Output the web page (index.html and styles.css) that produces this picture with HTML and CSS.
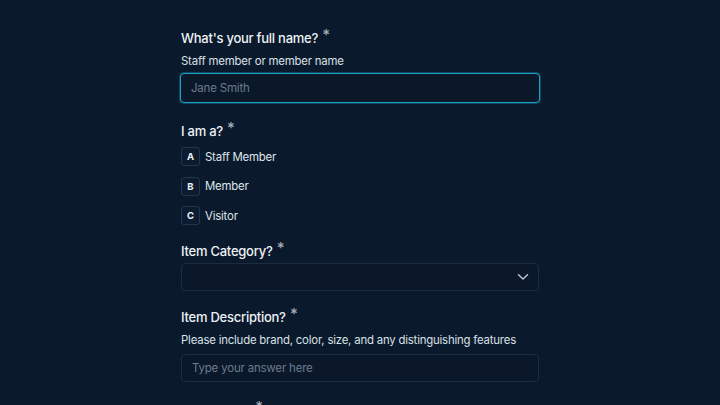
FILE: index.html
```html
<!DOCTYPE html>
<html lang="en">
<head>
<meta charset="utf-8">
<title>Lost item form</title>
<link rel="stylesheet" href="styles.css">
</head>
<body>
<main class="form">
  <section class="field">
    <div class="label">What's your full name? <span class="req">*</span></div>
    <div class="help">Staff member or member name</div>
    <div class="input focused"><span class="ph">Jane Smith</span></div>
  </section>

  <section class="field">
    <div class="label label-tight">I am a? <span class="req">*</span></div>
    <div class="options">
      <div class="option"><span class="key">A</span><span class="opt-text">Staff Member</span></div>
      <div class="option"><span class="key">B</span><span class="opt-text">Member</span></div>
      <div class="option"><span class="key">C</span><span class="opt-text">Visitor</span></div>
    </div>
  </section>

  <section class="field">
    <div class="label">Item Category? <span class="req">*</span></div>
    <div class="input select">
      <svg class="chev" width="12" height="8" viewBox="0 0 12 8"><path d="M1.5 1.8 L6 6 L10.5 1.8" fill="none" stroke="#b9c3ce" stroke-width="1.5" stroke-linecap="round" stroke-linejoin="round"/></svg>
    </div>
  </section>

  <section class="field">
    <div class="label">Item Description? <span class="req">*</span></div>
    <div class="help">Please include brand, color, size, and any distinguishing features</div>
    <div class="input text"><span class="ph">Type your answer here</span></div>
  </section>

  <section class="field">
    <div class="label">Area/Zone? <span class="req">*</span></div>
  </section>
</main>
</body>
</html>
```

FILE: styles.css
```css
html, body {
  margin: 0;
  padding: 0;
  background: #0a192b;
}
body {
  font-family: Inter, "Noto Sans", "Liberation Sans", sans-serif;
  color: #e6ebf1;
  height: 405px;
  overflow: hidden;
}
.form {
  width: 358px;
  margin: 0 auto;
  padding-top: 28px;
  display: flex;
  flex-direction: column;
  gap: 15px;
}
.field {
  display: flex;
  flex-direction: column;
}
.label {
  font-size: 13px;
  letter-spacing: -0.25px;
  font-weight: 500;
  line-height: 20px;
  height: 20px;
  color: #edf1f5;
  margin-bottom: 2px;
}
.label-tight {
  margin-bottom: 6px;
}
.req {
  color: #a3adb9;
  font-size: 15px;
  line-height: 1;
  vertical-align: top;
  position: relative;
  top: -1px;
  margin-left: 1px;
  letter-spacing: 0;
}
.help {
  font-size: 11.4px;
  letter-spacing: -0.2px;
  line-height: 18px;
  height: 18px;
  color: #d9e0e7;
  margin-top: 2px;
  margin-bottom: 4px;
}
.input {
  height: 28px;
  box-sizing: border-box;
  border: 1px solid #1c2d42;
  border-radius: 4px;
  background: #0a182a;
  display: flex;
  align-items: center;
  padding: 0 10px;
  margin-bottom: 1px;
}
.input.focused {
  height: 30px;
  border: 1.5px solid #1ea0c3;
  box-shadow: 0 0 0 1px rgba(30, 160, 195, 0.35);
  margin: -1px -1px 3px;
  padding: 0 10px;
}
.input.text {
  margin-top: 1px;
  margin-bottom: 3px;
}
.ph {
  font-size: 11.5px;
  letter-spacing: -0.2px;
  color: #6b7b8e;
}
.select {
  justify-content: flex-end;
  padding-right: 9px;
}
.options {
  display: flex;
  flex-direction: column;
  gap: 10px;
}
.option {
  display: flex;
  align-items: center;
  gap: 5px;
  height: 19.5px;
}
.key {
  width: 19px;
  height: 19px;
  box-sizing: border-box;
  border: 1px solid #22354b;
  border-radius: 3px;
  background: #0c1c30;
  display: flex;
  align-items: center;
  justify-content: center;
  font-size: 9.5px;
  font-weight: 700;
  color: #eef2f6;
}
.opt-text {
  font-size: 11.4px;
  letter-spacing: -0.2px;
  color: #dfe5ec;
}
```
